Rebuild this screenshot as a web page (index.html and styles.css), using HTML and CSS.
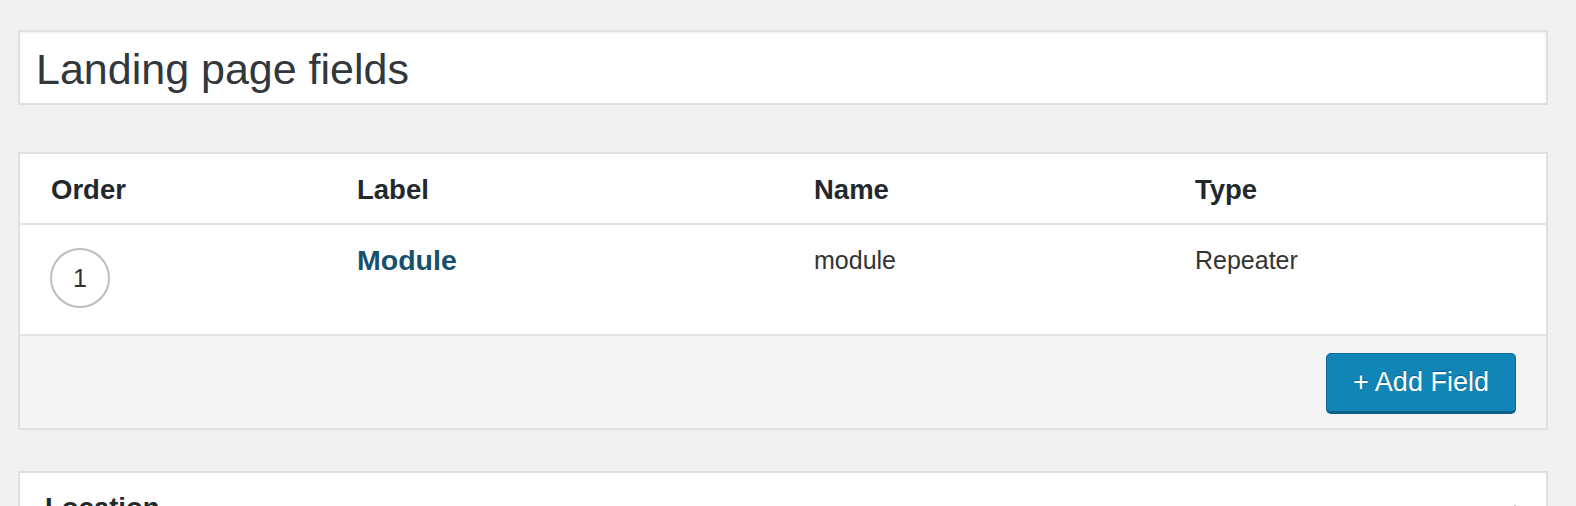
FILE: index.html
```html
<!DOCTYPE html>
<html>
<head>
<meta charset="utf-8">
<link rel="stylesheet" href="styles.css">
</head>
<body>
<div class="page">
  <div class="title-box">Landing page fields</div>

  <div class="fields-box">
    <div class="fields-head">
      <div class="cell">Order</div>
      <div class="cell">Label</div>
      <div class="cell">Name</div>
      <div class="cell">Type</div>
    </div>
    <div class="fields-row">
      <div class="cell"><span class="order-circle">1</span></div>
      <div class="cell"><a class="field-label">Module</a></div>
      <div class="cell">module</div>
      <div class="cell">Repeater</div>
    </div>
    <div class="fields-foot">
      <button class="add-btn">+ Add Field</button>
    </div>
  </div>

  <div class="postbox">
    <div class="postbox-head">
      <span class="postbox-title">Location</span>
      <span class="toggle"></span>
    </div>
  </div>
</div>
</body>
</html>
```

FILE: styles.css
```css
html, body {
  margin: 0;
  padding: 0;
  background: #f1f1f1;
  overflow: hidden;
}

.page {
  padding: 30px 28px 0 18px;
  font-family: "Liberation Sans", Arial, sans-serif;
  color: #32373c;
}

.title-box {
  background: #fff;
  border: 2px solid #e0e0e0;
  box-shadow: inset 0 1px 3px rgba(0,0,0,0.07);
  height: 67px;
  padding: 4px 16px 0 16px;
  line-height: 67px;
  font-size: 43px;
  color: #32373c;
}

.fields-box {
  margin-top: 47px;
  background: #fff;
  border: 2px solid #e0e0e0;
}

.fields-head,
.fields-row {
  display: grid;
  grid-template-columns: 306px 457px 381px 1fr;
  padding-left: 31px;
  border-bottom: 2px solid #e3e3e3;
}

.fields-head {
  height: 66px;
  padding-top: 3px;
  line-height: 66px;
  font-size: 27.5px;
  font-weight: bold;
  color: #23282d;
}

.fields-row {
  height: 89px;
  padding-top: 20px;
  line-height: 30px;
  font-size: 25px;
  color: #333;
}

.order-circle {
  display: flex;
  align-items: center;
  justify-content: center;
  width: 56px;
  height: 56px;
  margin-top: 3px;
  margin-left: -1px;
  border: 2px solid #bdbdbd;
  border-radius: 50%;
  font-size: 25px;
  color: #333;
}

.field-label {
  font-size: 28.5px;
  font-weight: bold;
  color: #17506e;
  text-decoration: none;
}

.fields-foot {
  background: #f4f4f4;
  display: flex;
  justify-content: flex-end;
  padding: 17px 30px 14px 30px;
}

.add-btn {
  width: 190px;
  height: 61px;
  background: #1285b7;
  border: 1px solid #0d6d9c;
  border-bottom: 3px solid #0b5e88;
  border-radius: 5px;
  color: #fff;
  font-family: "Liberation Sans", Arial, sans-serif;
  font-size: 27px;
  padding: 0;
  text-shadow: 0 -1px 1px #0b5e88;
}

.postbox {
  margin-top: 41px;
  background: #fff;
  border: 2px solid #e0e0e0;
  height: 200px;
}

.postbox-head {
  display: flex;
  justify-content: space-between;
  padding: 20px 24px 0 25px;
}

.postbox-title {
  font-size: 27.5px;
  font-weight: bold;
  line-height: 30px;
  color: #23282d;
}

.toggle {
  width: 0;
  height: 0;
  margin-top: 12px;
  border-left: 7px solid transparent;
  border-right: 7px solid transparent;
  border-bottom: 8px solid #72777c;
}
```
